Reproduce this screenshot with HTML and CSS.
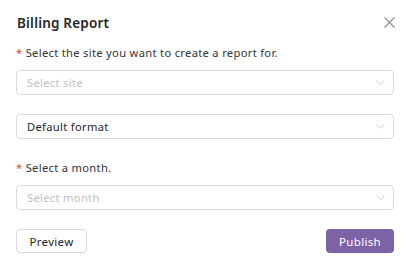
FILE: index.html
```html
<!DOCTYPE html>
<html lang="en">
<head>
    <meta charset="UTF-8">
    <title>Billing Report</title>
    <link rel="stylesheet" href="styles.css">
</head>
<body>
    <div class="modal">
        <div class="modal-header">
            <h2>Billing Report</h2>
            <button class="close-btn" aria-label="Close">
                <svg width="11" height="11" viewBox="0 0 11 11"><path d="M0.5 0.5 L10.5 10.5 M10.5 0.5 L0.5 10.5" stroke="#8c8c8c" stroke-width="1.1" fill="none"/></svg>
            </button>
        </div>

        <label class="field-label"><span class="req">*</span> Select the site you want to create a report for.</label>
        <div class="select placeholder">
            <span>Select site</span>
            <svg class="chev" width="9" height="5" viewBox="0 0 9 5"><path d="M0.5 0.5 L4.5 4.5 L8.5 0.5" stroke="#cfcfcf" stroke-width="0.9" fill="none"/></svg>
        </div>

        <div class="select format">
            <span>Default format</span>
            <svg class="chev" width="9" height="5" viewBox="0 0 9 5"><path d="M0.5 0.5 L4.5 4.5 L8.5 0.5" stroke="#cfcfcf" stroke-width="0.9" fill="none"/></svg>
        </div>

        <label class="field-label"><span class="req">*</span> Select a month.</label>
        <div class="select placeholder">
            <span>Select month</span>
            <svg class="chev" width="9" height="5" viewBox="0 0 9 5"><path d="M0.5 0.5 L4.5 4.5 L8.5 0.5" stroke="#cfcfcf" stroke-width="0.9" fill="none"/></svg>
        </div>

        <div class="modal-footer">
            <button class="btn btn-default">Preview</button>
            <button class="btn btn-primary">Publish</button>
        </div>
    </div>
</body>
</html>
```

FILE: styles.css
```css
body {
    margin: 0;
    background: #fff;
    font-family: 'Noto Sans', sans-serif;
    color: #262626;
}

.modal {
    padding: 12px 12px 10px 16px;
}

/* Header with title and close button */
.modal-header {
    display: flex;
    justify-content: space-between;
    align-items: center;
    height: 22px;
    margin-bottom: 12px;
}

.modal-header h2 {
    margin: 0 0 0 1px;
    font-size: 13.5px;
    font-weight: 600;
    letter-spacing: 0.2px;
    color: #262626;
}

.close-btn {
    border: none;
    background: none;
    padding: 0;
    width: 11px;
    height: 11px;
    margin: 0 -1px 2px 0;
    display: flex;
}

.field-label {
    display: block;
    font-size: 11.2px;
    line-height: 14px;
    letter-spacing: 0.3px;
    margin-bottom: 10px;
    color: #333;
}

.req {
    color: #e8472d;
}

/* Select boxes */
.select {
    display: flex;
    justify-content: space-between;
    align-items: center;
    height: 23px;
    border: 1px solid #d9d9d9;
    border-radius: 4px;
    padding: 0 8px 0 10px;
    font-size: 11.2px;
    letter-spacing: 0.3px;
    margin-bottom: 19px;
}

.select.placeholder {
    color: #bfbfbf;
}

.select.format {
    color: #262626;
    margin-bottom: 22px;
}

.modal-footer {
    display: flex;
    justify-content: space-between;
    margin-top: 1px;
}

.btn {
    font-family: inherit;
    font-size: 11.5px;
    letter-spacing: 0.3px;
    height: 24px;
    border-radius: 4px;
    cursor: pointer;
}

.btn-default {
    width: 71px;
    background: #fff;
    border: 1px solid #d9d9d9;
    color: #262626;
}

.btn-primary {
    width: 68px;
    background: #7e62a6;
    border: none;
    color: #fff;
}
```
